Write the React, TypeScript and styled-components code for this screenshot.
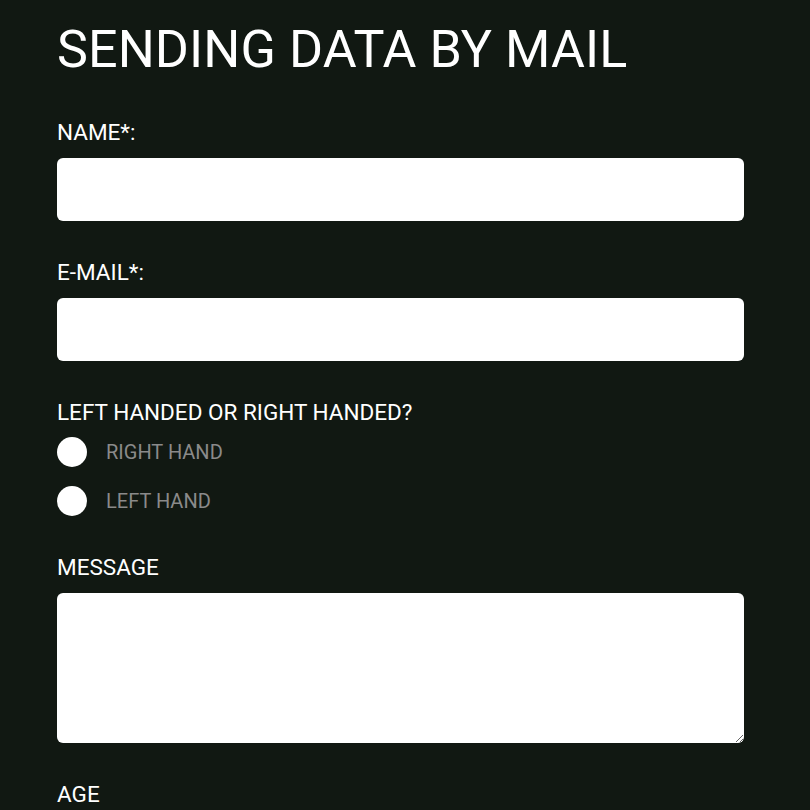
import React from "react";
import styled, { createGlobalStyle } from "styled-components";

const Global = createGlobalStyle`
  html, body { margin: 0; padding: 0; background: #111812; }
  body { font-family: Roboto, "Noto Sans", Arial, sans-serif; color: #ffffff; }
  * { box-sizing: border-box; }
`;

const Page = styled.div`
  min-height: 810px;
  background: #111812;
  padding: 20px 66px 40px 57px;
`;

const Title = styled.h1`
  margin: 0 0 38px;
  font-size: 52px;
  line-height: 60px;
  font-weight: 400;
  letter-spacing: 0.1px;
  color: #ffffff;
`;

const Form = styled.form`
  display: flex;
  flex-direction: column;
  gap: 37px;
`;

const Field = styled.div`
  display: flex;
  flex-direction: column;
`;

const Label = styled.label`
  font-size: 22.5px;
  line-height: 28px;
  font-weight: 400;
  color: #ffffff;
  margin-bottom: 12px;
`;

const TextInput = styled.input`
  display: block;
  width: 100%;
  height: 63px;
  border: none;
  border-radius: 6px;
  background: #ffffff;
  padding: 0 16px;
  font-size: 18px;
  outline: none;
`;

const TextArea = styled.textarea`
  display: block;
  width: 100%;
  height: 150px;
  border: none;
  border-radius: 6px;
  background: #ffffff;
  padding: 12px 16px;
  font-size: 18px;
  outline: none;
  resize: vertical;
`;

const RadioList = styled.div`
  display: flex;
  flex-direction: column;
  gap: 19px;
  margin-top: -1px;
`;

const RadioRow = styled.label`
  display: flex;
  align-items: center;
  gap: 19px;
  font-size: 20px;
  color: #8a8a8a;
  cursor: pointer;
`;

const RadioDot = styled.span`
  width: 30px;
  height: 30px;
  border-radius: 50%;
  background: #ffffff;
  flex: none;
`;

const HiddenRadio = styled.input`
  display: none;
`;

export default function App() {
  return (
    <>
      <Global />
      <Page>
        <Title>SENDING DATA BY MAIL</Title>
        <Form onSubmit={(e) => e.preventDefault()}>
          <Field>
            <Label>NAME*:</Label>
            <TextInput type="text" />
          </Field>
          <Field>
            <Label>E-MAIL*:</Label>
            <TextInput type="email" />
          </Field>
          <Field>
            <Label>LEFT HANDED OR RIGHT HANDED?</Label>
            <RadioList>
              <RadioRow>
                <HiddenRadio type="radio" name="hand" />
                <RadioDot />
                RIGHT HAND
              </RadioRow>
              <RadioRow>
                <HiddenRadio type="radio" name="hand" />
                <RadioDot />
                LEFT HAND
              </RadioRow>
            </RadioList>
          </Field>
          <Field>
            <Label>MESSAGE</Label>
            <TextArea />
          </Field>
          <Field>
            <Label>AGE</Label>
          </Field>
        </Form>
      </Page>
    </>
  );
}
